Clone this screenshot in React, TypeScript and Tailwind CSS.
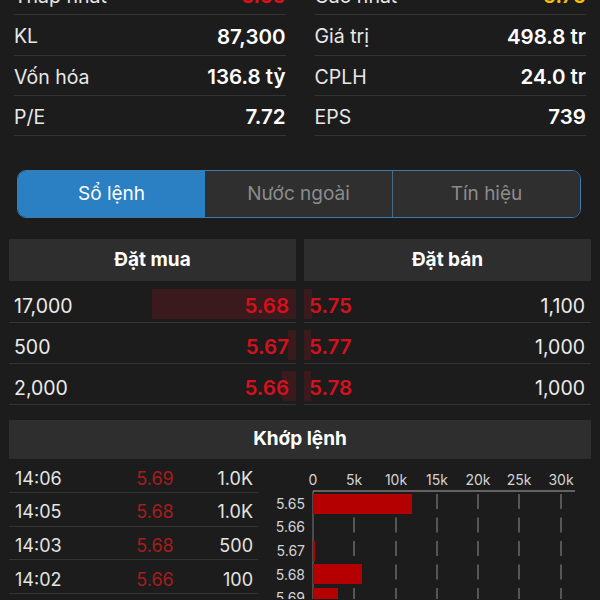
import React from 'react';

const font = { fontFamily: 'Inter, "Noto Sans", "Liberation Sans", sans-serif' };

const statsLeft = [
  { label: 'Thấp nhất', value: '5.65', tone: 'text-[#e3101c]' },
  { label: 'KL', value: '87,300' },
  { label: 'Vốn hóa', value: '136.8 tỷ' },
  { label: 'P/E', value: '7.72' },
];

const statsRight = [
  { label: 'Cao nhất', value: '5.75', tone: 'text-[#f2c200]' },
  { label: 'Giá trị', value: '498.8 tr' },
  { label: 'CPLH', value: '24.0 tr' },
  { label: 'EPS', value: '739' },
];

const bids = [
  { qty: '17,000', price: '5.68', bar: 144 },
  { qty: '500', price: '5.67', bar: 8 },
  { qty: '2,000', price: '5.66', bar: 14 },
];

const asks = [
  { qty: '1,100', price: '5.75', bar: 8 },
  { qty: '1,000', price: '5.77', bar: 7 },
  { qty: '1,000', price: '5.78', bar: 7 },
];

const matches = [
  { time: '14:06', price: '5.69', vol: '1.0K' },
  { time: '14:05', price: '5.68', vol: '1.0K' },
  { time: '14:03', price: '5.68', vol: '500' },
  { time: '14:02', price: '5.66', vol: '100' },
];

function StatColumn({ rows }: { rows: { label: string; value: string; tone?: string }[] }) {
  return (
    <div className="flex-1">
      {rows.map((r) => (
        <div key={r.label} className="h-[40.3px] pt-[4px] flex items-center justify-between border-b border-[#343434]">
          <span className="text-[19.5px] text-[#e8e8e8]">{r.label}</span>
          <span className={`text-[20.5px] font-semibold ${r.tone ?? 'text-white'}`}>{r.value}</span>
        </div>
      ))}
    </div>
  );
}

function VolumeChart() {
  const ticks = ['0', '5k', '10k', '15k', '20k', '25k', '30k'];
  const tx = [55, 96, 138, 179, 220, 261, 303];
  const levels = [
    { p: '5.65', y: 50, w: 99, top: 35 },
    { p: '5.66', y: 73, w: 0, top: 58 },
    { p: '5.67', y: 97, w: 2, top: 82 },
    { p: '5.68', y: 121, w: 49, top: 105 },
    { p: '5.69', y: 144, w: 25, top: 129 },
  ];
  return (
    <svg width="342" height="140" className="block">
      {tx.slice(1).map((x) => (
        <line key={x} x1={x} x2={x} y1={35} y2={140} stroke="#6a6a6a" strokeWidth="1.5" strokeDasharray="15 8.5" />
      ))}
      <line x1={55} x2={317} y1={32} y2={32} stroke="#7a7a7a" strokeWidth="1.5" />
      <line x1={55} x2={55} y1={32} y2={140} stroke="#7a7a7a" strokeWidth="1" />
      {levels.map((l) => (
        <rect key={l.p} x={55} y={l.top} width={l.w} height={20} fill="#b40000" />
      ))}
      {ticks.map((t, i) => (
        <text key={t} x={tx[i]} y={26} textAnchor="middle" fill="#d4d4d4" fontSize="14" style={font}>
          {t}
        </text>
      ))}
      {levels.map((l) => (
        <text key={l.p} x={47} y={l.y} textAnchor="end" fill="#d4d4d4" fontSize="14" style={font}>
          {l.p}
        </text>
      ))}
    </svg>
  );
}

export default function App() {
  return (
    <div className="w-[600px] h-[600px] overflow-hidden bg-[#1c1c1c]" style={font}>
      {/* summary stats */}
      <div className="flex gap-[29px] px-[14px] -mt-[25px]">
        <StatColumn rows={statsLeft} />
        <StatColumn rows={statsRight} />
      </div>

      {/* segmented tabs */}
      <div className="ml-[17px] mt-[34px] w-[564px] h-[48px] flex rounded-[9px] border-[1.5px] border-[#3a7bb0] overflow-hidden">
        <div className="flex-1 flex items-center justify-center bg-[#2a80c2] text-white text-[19px]">Sổ lệnh</div>
        <div className="flex-1 flex items-center justify-center bg-[#2f2f2f] text-[#8c8c8c] text-[19px] border-r border-[#4a6a85]">Nước ngoài</div>
        <div className="flex-1 flex items-center justify-center bg-[#2f2f2f] text-[#8c8c8c] text-[19px]">Tín hiệu</div>
      </div>

      {/* order book */}
      <div className="flex gap-[8px] px-[9px] mt-[21px]">
        <div className="flex-1">
          <div className="h-[42px] flex items-center justify-center bg-[#2e2e2e] text-white text-[19px] font-bold">Đặt mua</div>
          <div className="mt-[1px]">
            {bids.map((b) => (
              <div key={b.price} className="relative h-[41px] pt-[8px] flex items-center justify-between border-b border-[#343434] pl-[5px] pr-[7px]">
                <div className="absolute right-0 top-[7px] bottom-[3px] bg-[#3a1a1c]" style={{ width: b.bar }} />
                <span className="relative text-[19.5px] text-[#ececec]">{b.qty}</span>
                <span className="relative text-[20.5px] font-semibold text-[#d6101c]">{b.price}</span>
              </div>
            ))}
          </div>
        </div>
        <div className="flex-1">
          <div className="h-[42px] flex items-center justify-center bg-[#2e2e2e] text-white text-[19px] font-bold">Đặt bán</div>
          <div className="mt-[1px]">
            {asks.map((a) => (
              <div key={a.price} className="relative h-[41px] pt-[8px] flex items-center justify-between border-b border-[#343434] pl-[5px] pr-[6px]">
                <div className="absolute left-0 top-[7px] bottom-[3px] bg-[#3a1a1c]" style={{ width: a.bar }} />
                <span className="relative text-[20.5px] font-semibold text-[#d6101c]">{a.price}</span>
                <span className="relative text-[19.5px] text-[#ececec]">{a.qty}</span>
              </div>
            ))}
          </div>
        </div>
      </div>

      {/* matched orders */}
      <div className="mx-[9px] mt-[15px] h-[39px] flex items-center justify-center bg-[#2e2e2e] text-white text-[19px] font-bold">Khớp lệnh</div>
      <div className="flex">
        <div className="ml-[9px] w-[249px]">
          {matches.map((m) => (
            <div key={m.time} className="h-[33.7px] pt-[5px] flex items-center border-b border-[#343434] pl-[6px] pr-[5px]">
              <span className="w-[100px] text-[18px] text-[#e4e4e4]">{m.time}</span>
              <span className="w-[80px] text-center text-[18px] text-[#a81c1c]">{m.price}</span>
              <span className="flex-1 text-right text-[18px] text-[#e4e4e4]">{m.vol}</span>
            </div>
          ))}
        </div>
        <VolumeChart />
      </div>
    </div>
  );
}
